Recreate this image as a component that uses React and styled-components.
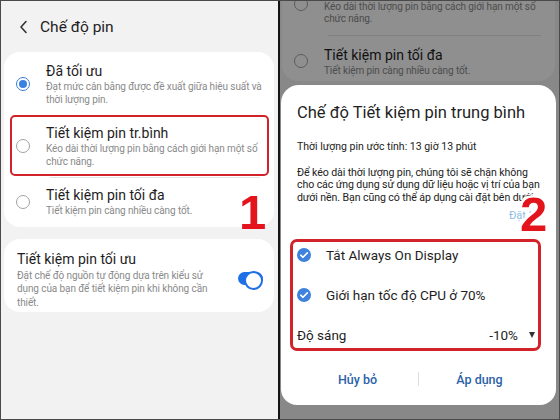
import React from 'react';
import styled, { createGlobalStyle } from 'styled-components';

const Global = createGlobalStyle`
  html, body { margin: 0; padding: 0; background: #fff; }
  body { font-family: Roboto, "Noto Sans", "Liberation Sans", sans-serif; }
  * { box-sizing: border-box; }
`;

const Frame = styled.div`
  width: 560px;
  height: 420px;
  border: 1px solid #4a4a4a;
  display: flex;
  overflow: hidden;
`;

const LeftPanel = styled.div`
  width: 277px;
  background: #f2f2f2;
  display: flex;
  flex-direction: column;
  position: relative;
`;

const Divider = styled.div`
  width: 2px;
  background: #151515;
`;

const RightPanel = styled.div`
  flex: 1;
  background: #f2f2f2;
  display: flex;
  flex-direction: column;
  position: relative;
  &::after {
    content: '';
    position: absolute;
    inset: 0;
    background: rgba(0, 0, 0, 0.44);
    pointer-events: none;
    z-index: 1;
  }
`;

const Header = styled.div`
  height: 51px;
  display: flex;
  align-items: center;
  padding-left: 18px;
  gap: 12px;
  color: #1e1e1e;
  font-size: 15.5px;
`;

const Card = styled.div`
  background: #fff;
  margin: ${(p) => p.$mt || 0}px 4px 0 3px;
  border-radius: 16px;
  overflow: hidden;
`;

const Option = styled.div`
  display: flex;
  align-items: center;
  gap: 16px;
  padding: ${(p) => p.$pt ?? 9}px 8px ${(p) => p.$pb ?? 9}px 12px;
  position: relative;
  &::before {
    content: '';
    display: ${(p) => (p.$divided ? 'block' : 'none')};
    position: absolute;
    top: 0;
    left: 46px;
    right: 14px;
    height: 1px;
    background: #e4e4e4;
  }
`;

const Radio = styled.span`
  flex: none;
  width: 14px;
  height: 14px;
  border-radius: 50%;
  border: 1.5px solid ${(p) => (p.$on ? '#3b7fe0' : '#a2a2a2')};
  display: flex;
  align-items: center;
  justify-content: center;
  &::after {
    content: '';
    display: ${(p) => (p.$on ? 'block' : 'none')};
    width: 8px;
    height: 8px;
    border-radius: 50%;
    background: #3b7fe0;
  }
`;

const OptionText = styled.div`
  flex: 1;
  min-width: 0;
`;

const Title = styled.div`
  font-size: 14px;
  line-height: ${(p) => p.$lh || 19}px;
  color: #1e1e1e;
`;

const Desc = styled.div`
  font-size: 10px;
  letter-spacing: -0.1px;
  line-height: ${(p) => p.$lh || 12.5}px;
  color: #8a8a8a;
`;

const ToggleRow = styled.div`
  display: flex;
  align-items: center;
  padding: 10px 11px 3px 13px;
`;

const ToggleText = styled.div`
  width: 200px;
`;

const Toggle = styled.span`
  margin-left: auto;
  width: 25px;
  height: 15px;
  position: relative;
  display: block;
  &::before {
    content: '';
    position: absolute;
    left: 0;
    top: 1px;
    width: 25px;
    height: 13px;
    border-radius: 7px;
    background: #1f6fe6;
  }
  &::after {
    content: '';
    position: absolute;
    right: 0;
    top: 0;
    width: 15px;
    height: 15px;
    border-radius: 50%;
    background: #fff;
    border: 2px solid #1f6fe6;
  }
`;

const Highlight = styled.div`
  position: absolute;
  left: ${(p) => p.$x}px;
  top: ${(p) => p.$y}px;
  width: ${(p) => p.$w}px;
  height: ${(p) => p.$h}px;
  border: ${(p) => p.$bw || 2.5}px solid #d2232a;
  border-radius: ${(p) => p.$r || 5}px;
  pointer-events: none;
`;

const BigNumber = styled.div`
  position: absolute;
  left: ${(p) => p.$x}px;
  top: ${(p) => p.$y}px;
  font-family: "Liberation Sans", Arial, sans-serif;
  font-weight: 700;
  font-size: 49px;
  line-height: 1;
  color: #e3141c;
  z-index: 3;
  text-shadow: ${(p) =>
    p.$masked
      ? '2px 0 #fff, -2px 0 #fff, 0 2px #fff, 0 -2px #fff, 2px 2px #fff, -2px -2px #fff, 2px -2px #fff, -2px 2px #fff'
      : 'none'};
`;

const BackArea = styled.div`
  height: 84px;
  overflow: hidden;
  display: flex;
  flex-direction: column;
  justify-content: flex-end;
  padding-bottom: 4px;
  flex: none;
`;

const BackCard = styled.div`
  background: #fff;
  margin: 0 4px 0 2px;
  border-radius: 0 0 16px 16px;
`;

const Sheet = styled.div`
  flex: 1;
  background: #fff;
  margin: 0 3px 14px 1px;
  border-radius: 18px 18px 16px 16px;
  padding: 0 16px 0 16px;
  display: flex;
  flex-direction: column;
  position: relative;
  z-index: 2;
`;

const SheetTitle = styled.div`
  margin-top: 17px;
  font-size: 16.5px;
  line-height: 22px;
  color: #1f1f1f;
`;

const Estimate = styled.div`
  margin-top: 16px;
  font-size: 10.5px;
  line-height: 14px;
  color: #222;
`;

const Para = styled.div`
  margin-top: 12.5px;
  font-size: 10.6px;
  letter-spacing: -0.1px;
  line-height: 12.7px;
  color: #222;
  margin-right: -4px;
`;

const ResetLink = styled.div`
  margin-top: 4.5px;
  text-align: right;
  font-size: 11px;
  line-height: 14px;
  color: #8fbde2;
`;

const SettingList = styled.div`
  margin-top: 12px;
  display: flex;
  flex-direction: column;
`;

const SettingRow = styled.div`
  height: 40px;
  display: flex;
  align-items: center;
  gap: 15px;
  font-size: 13.5px;
  color: #1e1e1e;
  padding-right: 5px;
`;

const Value = styled.span`
  margin-left: auto;
  display: flex;
  align-items: center;
  gap: 11px;
`;

const Caret = styled.span`
  width: 0;
  height: 0;
  border-left: 3.5px solid transparent;
  border-right: 3.5px solid transparent;
  border-top: 6px solid #333;
`;

const Buttons = styled.div`
  margin-top: 9px;
  height: 30px;
  display: flex;
  align-items: center;
`;

const Btn = styled.div`
  flex: 1;
  text-align: center;
  font-size: 12.5px;
  font-weight: 500;
  color: #2b62a7;
`;

const BtnDivider = styled.span`
  width: 1px;
  height: 14px;
  background: #dedede;
`;

const CheckIcon = () => (
  <svg width="14" height="14" viewBox="0 0 14 14" style={{ flex: 'none' }}>
    <circle cx="7" cy="7" r="7" fill="#3e82dc" />
    <path d="M3.8 7.2 L6 9.3 L10.3 4.9" fill="none" stroke="#fff" strokeWidth="1.6" strokeLinecap="round" strokeLinejoin="round" />
  </svg>
);

const Chevron = () => (
  <svg width="9" height="14" viewBox="0 0 9 14">
    <path d="M7 1.5 L2 7 L7 12.5" fill="none" stroke="#333" strokeWidth="1.6" strokeLinecap="round" strokeLinejoin="round" />
  </svg>
);

export default function App() {
  return (
    <>
      <Global />
      <Frame>
        <LeftPanel>
          <Header>
            <Chevron />
            <span>Chế độ pin</span>
          </Header>
          <Card>
            <Option $pt={10}>
              <Radio $on />
              <OptionText>
                <Title>Đã tối ưu</Title>
                <Desc>Đạt mức cân bằng được đề xuất giữa hiệu suất và thời lượng pin.</Desc>
              </OptionText>
            </Option>
            <Option $divided>
              <Radio />
              <OptionText>
                <Title>Tiết kiệm pin tr.bình</Title>
                <Desc>Kéo dài thời lượng pin bằng cách giới hạn một số chức năng.</Desc>
              </OptionText>
            </Option>
            <Option $divided>
              <Radio />
              <OptionText>
                <Title>Tiết kiệm pin tối đa</Title>
                <Desc>Tiết kiệm pin càng nhiều càng tốt.</Desc>
              </OptionText>
            </Option>
          </Card>
          <Card $mt={12}>
            <ToggleRow>
              <ToggleText>
                <Title $lh={20}>Tiết kiệm pin tối ưu</Title>
                <Desc $lh={13.5}>Đặt chế độ nguồn tự động dựa trên kiểu sử dụng của bạn để tiết kiệm pin khi không cần thiết.</Desc>
              </ToggleText>
              <Toggle />
            </ToggleRow>
          </Card>
          <Highlight $x={9} $y={114} $w={259} $h={61} />
          <BigNumber $x={238} $y={187}>1</BigNumber>
        </LeftPanel>
        <Divider />
        <RightPanel>
          <BackArea>
            <BackCard>
              <Option>
                <Radio />
                <OptionText>
                  <Title>Tiết kiệm pin tr.bình</Title>
                  <Desc>Kéo dài thời lượng pin bằng cách giới hạn một số chức năng.</Desc>
                </OptionText>
              </Option>
              <Option $divided $pt={11} $pb={4}>
                <Radio />
                <OptionText>
                  <Title>Tiết kiệm pin tối đa</Title>
                  <Desc>Tiết kiệm pin càng nhiều càng tốt.</Desc>
                </OptionText>
              </Option>
            </BackCard>
          </BackArea>
          <Sheet>
            <SheetTitle>Chế độ Tiết kiệm pin trung bình</SheetTitle>
            <Estimate>Thời lượng pin ước tính: 13 giờ 13 phút</Estimate>
            <Para>
              Để kéo dài thời lượng pin, chúng tôi sẽ chặn không cho các ứng dụng sử dụng dữ liệu hoặc vị trí của bạn dưới nền. Bạn cũng có thể áp dụng cài đặt bên dưới.
            </Para>
            <ResetLink>Đặt lại</ResetLink>
            <SettingList>
              <SettingRow>
                <CheckIcon />
                <span>Tắt Always On Display</span>
              </SettingRow>
              <SettingRow>
                <CheckIcon />
                <span>Giới hạn tốc độ CPU ở 70%</span>
              </SettingRow>
              <SettingRow>
                <span>Độ sáng</span>
                <Value>
                  <span>-10%</span>
                  <Caret />
                </Value>
              </SettingRow>
            </SettingList>
            <Buttons>
              <Btn>Hủy bỏ</Btn>
              <BtnDivider />
              <Btn>Áp dụng</Btn>
            </Buttons>
            <Highlight $x={9} $y={154} $w={251} $h={112} $bw={3} $r={7} />
          </Sheet>
          <BigNumber $x={240} $y={189} $masked>2</BigNumber>
        </RightPanel>
      </Frame>
    </>
  );
}
